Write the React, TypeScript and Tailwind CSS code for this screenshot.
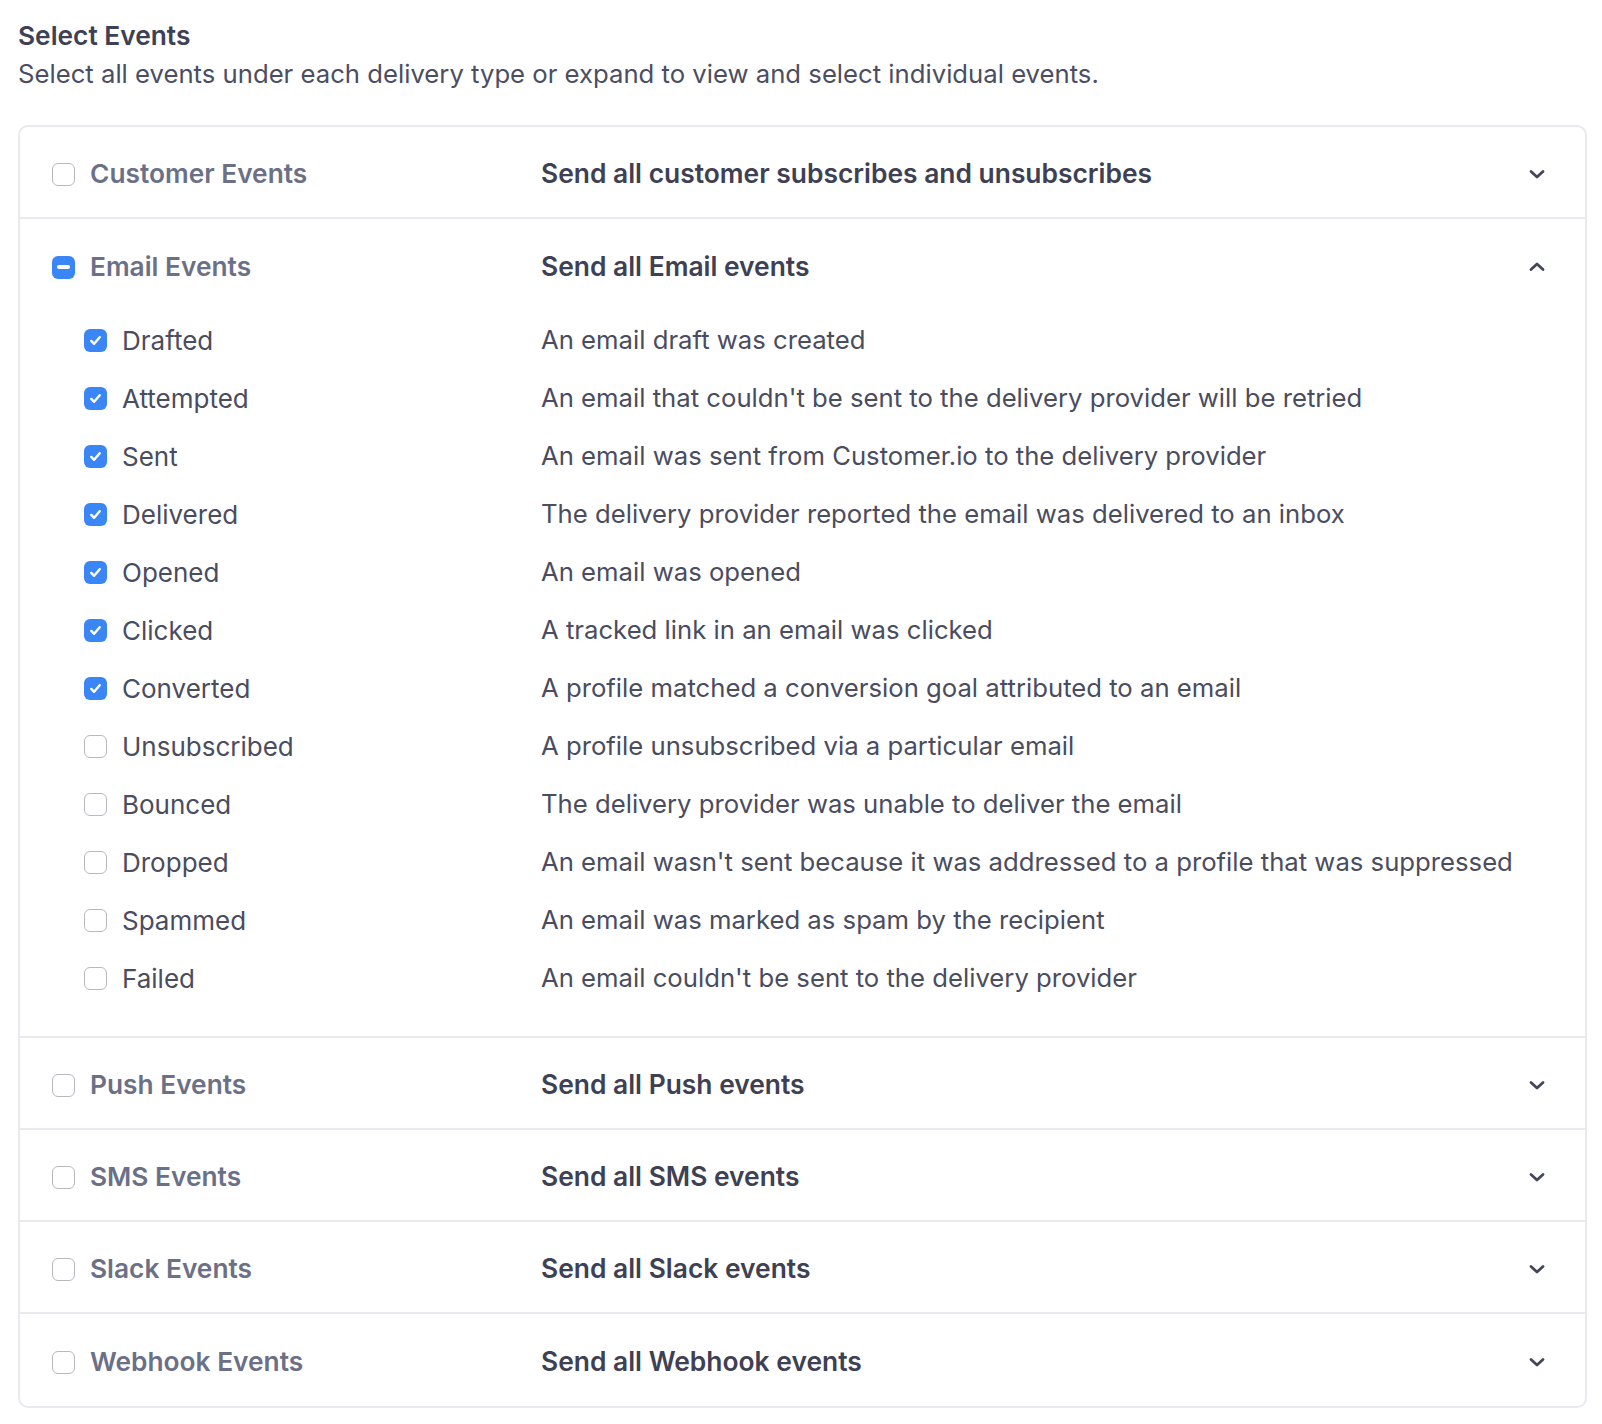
import React from "react";

type SubEvent = { name: string; desc: string; checked: boolean };

const emailEvents: SubEvent[] = [
  { name: "Drafted", desc: "An email draft was created", checked: true },
  { name: "Attempted", desc: "An email that couldn't be sent to the delivery provider will be retried", checked: true },
  { name: "Sent", desc: "An email was sent from Customer.io to the delivery provider", checked: true },
  { name: "Delivered", desc: "The delivery provider reported the email was delivered to an inbox", checked: true },
  { name: "Opened", desc: "An email was opened", checked: true },
  { name: "Clicked", desc: "A tracked link in an email was clicked", checked: true },
  { name: "Converted", desc: "A profile matched a conversion goal attributed to an email", checked: true },
  { name: "Unsubscribed", desc: "A profile unsubscribed via a particular email", checked: false },
  { name: "Bounced", desc: "The delivery provider was unable to deliver the email", checked: false },
  { name: "Dropped", desc: "An email wasn't sent because it was addressed to a profile that was suppressed", checked: false },
  { name: "Spammed", desc: "An email was marked as spam by the recipient", checked: false },
  { name: "Failed", desc: "An email couldn't be sent to the delivery provider", checked: false },
];

const Checkbox = ({ state }: { state: "on" | "off" | "mixed" }) => {
  if (state === "off") {
    return <div className="w-[23px] h-[23px] rounded-[6px] border-[1.5px] border-[#b8b8bf] bg-white flex-shrink-0" />;
  }
  return (
    <div className="w-[23px] h-[23px] rounded-[6px] bg-[#3b86f7] flex items-center justify-center flex-shrink-0">
      {state === "on" ? (
        <svg width="15" height="15" viewBox="0 0 16 16" fill="none">
          <path d="M3.5 8.5l3 3 6-7" stroke="white" strokeWidth="2.6" strokeLinecap="round" strokeLinejoin="round" />
        </svg>
      ) : (
        <div className="w-[13px] h-[4px] rounded-full bg-white" />
      )}
    </div>
  );
};

const Chevron = ({ up }: { up?: boolean }) => (
  <svg width="20" height="20" viewBox="0 0 20 20" fill="none">
    <path
      d={up ? "M4 12.5L10 7l6 5.5" : "M4 7.5L10 13l6-5.5"}
      stroke="#44465a"
      strokeWidth="2.8"
      strokeLinecap="round"
      strokeLinejoin="round"
    />
  </svg>
);

const GroupHeader = ({
  label,
  summary,
  state,
  open,
}: {
  label: string;
  summary: string;
  state: "on" | "off" | "mixed";
  open?: boolean;
}) => (
  <div className="h-[92px] flex items-center pt-[4px] pl-[32px] pr-[38px]">
    <div className="w-[489px] flex items-center gap-[15px]">
      <Checkbox state={state} />
      <span className="text-[26.3px] font-semibold text-[#6b7087]">{label}</span>
    </div>
    <div className="flex-1 text-[26.4px] font-semibold text-[#3e4054]">{summary}</div>
    <Chevron up={open} />
  </div>
);

export default function App() {
  const collapsed = [
    { label: "Push Events", summary: "Send all Push events" },
    { label: "SMS Events", summary: "Send all SMS events" },
    { label: "Slack Events", summary: "Send all Slack events" },
    { label: "Webhook Events", summary: "Send all Webhook events" },
  ];

  return (
    <div className="bg-white min-h-screen pl-[18px] pr-[15px] pt-[18px] pb-[16px]" style={{ fontFamily: "Inter, 'Noto Sans', sans-serif" }}>
      <h1 className="text-[26.3px] font-semibold text-[#3e4054] leading-[36px]">Select Events</h1>
      <p className="text-[25.7px] text-[#4b4e62] leading-[40px]">
        Select all events under each delivery type or expand to view and select individual events.
      </p>

      <div className="mt-[31px] border-2 border-[#e9e9ef] rounded-[10px] divide-y-2 divide-[#e9e9ef]">
        <GroupHeader label="Customer Events" summary="Send all customer subscribes and unsubscribes" state="off" />

        <div className="pb-[29px]">
          <GroupHeader label="Email Events" summary="Send all Email events" state="mixed" open />
          {emailEvents.map((ev) => (
            <div key={ev.name} className="h-[58px] flex items-center pl-[64px]">
              <div className="w-[457px] flex items-center gap-[15px]">
                <Checkbox state={ev.checked ? "on" : "off"} />
                <span className="text-[26px] text-[#4a4c60]">{ev.name}</span>
              </div>
              <div className="text-[25.7px] text-[#4a4c60]">{ev.desc}</div>
            </div>
          ))}
        </div>

        {collapsed.map((g) => (
          <GroupHeader key={g.label} label={g.label} summary={g.summary} state="off" />
        ))}
      </div>
    </div>
  );
}
